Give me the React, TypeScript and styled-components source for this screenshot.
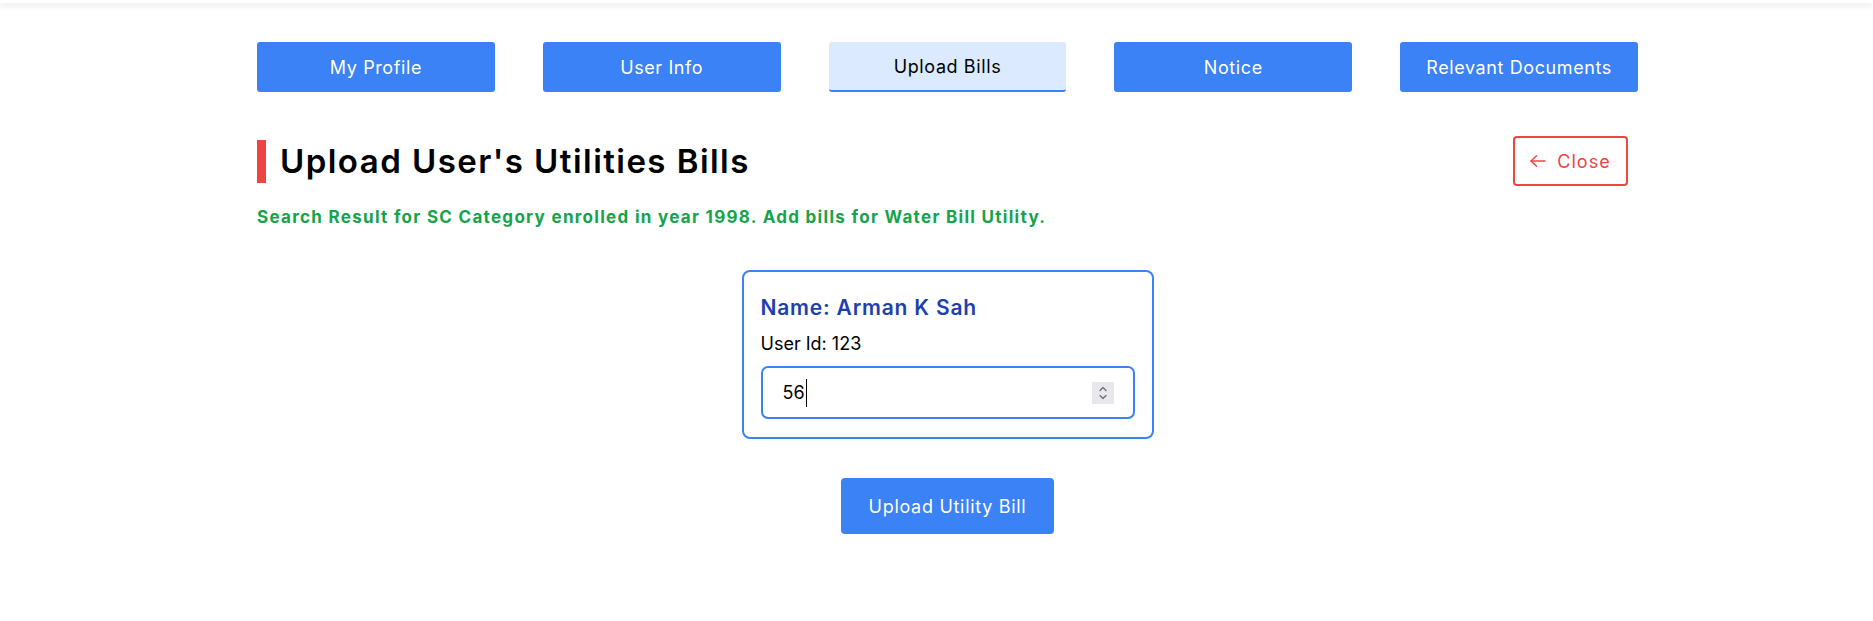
import React from "react";
import styled, { createGlobalStyle } from "styled-components";

const GlobalStyle = createGlobalStyle`
  html, body {
    margin: 0;
    padding: 0;
    background: #ffffff;
  }
  body {
    font-family: Inter, "Open Sans", Arial, sans-serif;
    color: #000000;
  }
  * { box-sizing: border-box; }
`;

const TopBar = styled.div`
  height: 3px;
  background: #ffffff;
  box-shadow: 0 2px 6px rgba(0, 0, 0, 0.14);
`;

const Main = styled.main`
  padding: 39px 235px 80px 257px;
`;

const Tabs = styled.nav`
  display: grid;
  grid-template-columns: repeat(5, 1fr);
  column-gap: 48px;
`;

const Tab = styled.button<{ $active?: boolean }>`
  height: 50px;
  border: none;
  border-radius: 3px;
  font-family: inherit;
  font-size: 18px;
  letter-spacing: 0.6px;
  font-weight: 400;
  cursor: pointer;
  background: ${(p) => (p.$active ? "#dbeafe" : "#3b82f6")};
  color: ${(p) => (p.$active ? "#000000" : "#ffffff")};
  border-bottom: ${(p) => (p.$active ? "2px solid #3b82f6" : "none")};
  padding: 0;
`;

const HeaderRow = styled.div`
  margin-top: 44px;
  display: flex;
  align-items: center;
  justify-content: space-between;
  padding-right: 10px;
`;

const Title = styled.h1`
  margin: 0;
  border-left: 9px solid #ef4444;
  padding-left: 14px;
  line-height: 43px;
  font-size: 33px;
  letter-spacing: 1.45px;
  font-weight: 600;
  color: #000000;
`;

const CloseButton = styled.button`
  width: 115px;
  height: 50px;
  display: flex;
  align-items: center;
  justify-content: center;
  gap: 11px;
  background: #ffffff;
  border: 2px solid #ef4444;
  border-radius: 4px;
  color: #ef4444;
  font-family: inherit;
  font-size: 18px;
  letter-spacing: 1px;
  cursor: pointer;
  padding: 0;
`;

const NoticeText = styled.p`
  margin: 19px 0 0;
  font-size: 17px;
  letter-spacing: 1.3px;
  line-height: 24px;
  font-weight: 700;
  color: #16a34a;
`;

const Center = styled.div<{ $top: number }>`
  display: flex;
  justify-content: center;
  margin-top: ${(p) => p.$top}px;
`;

const Card = styled.section`
  width: 412px;
  border: 2px solid #3b82f6;
  border-radius: 8px;
  padding: 22px 17px 18px;
  display: flex;
  flex-direction: column;
`;

const Name = styled.h2`
  margin: 0 0 9px;
  font-size: 21px;
  letter-spacing: 0.8px;
  line-height: 28px;
  font-weight: 600;
  color: #1e40af;
`;

const UserId = styled.div`
  font-size: 18px;
  line-height: 26px;
  margin-bottom: 9px;
`;

const Field = styled.div`
  height: 53px;
  border: 2px solid #3b82f6;
  border-radius: 7px;
  display: flex;
  align-items: center;
  padding: 0 19px 0 20px;
  font-size: 18px;
`;

const Value = styled.span`
  color: #000000;
`;

const Caret = styled.span`
  display: inline-block;
  width: 1px;
  height: 28px;
  background: #000000;
  margin-left: 1px;
`;

const Spacer = styled.span`
  flex: 1;
`;

const Spinner = styled.span`
  width: 22px;
  height: 22px;
  background: #e7e7ec;
  display: flex;
  align-items: center;
  justify-content: center;
`;

const UploadButton = styled.button`
  height: 56px;
  padding: 0 28px;
  border: none;
  border-radius: 4px;
  background: #3b82f6;
  color: #ffffff;
  font-family: inherit;
  font-size: 18px;
  letter-spacing: 0.7px;
  cursor: pointer;
`;

const tabs = ["My Profile", "User Info", "Upload Bills", "Notice", "Relevant Documents"];

export default function App() {
  return (
    <>
      <GlobalStyle />
      <TopBar />
      <Main>
        <Tabs>
          {tabs.map((t) => (
            <Tab key={t} $active={t === "Upload Bills"}>
              {t}
            </Tab>
          ))}
        </Tabs>
        <HeaderRow>
          <Title>Upload User's Utilities Bills</Title>
          <CloseButton>
            <svg width="16" height="12" viewBox="0 0 16 12" fill="none" stroke="#ef4444" strokeWidth="1.4" strokeLinecap="round" strokeLinejoin="round">
              <path d="M15 6H1" />
              <path d="M6.5 0.8L1 6l5.5 5.2" />
            </svg>
            <span>Close</span>
          </CloseButton>
        </HeaderRow>
        <NoticeText>
          Search Result for SC Category enrolled in year 1998. Add bills for Water Bill Utility.
        </NoticeText>
        <Center $top={41}>
          <Card>
            <Name>Name: Arman K Sah</Name>
            <UserId>User Id: 123</UserId>
            <Field>
              <Value>56</Value>
              <Caret />
              <Spacer />
              <Spinner>
                <svg width="10" height="16" viewBox="0 0 10 16" fill="none" stroke="#6b6b75" strokeWidth="1.2" strokeLinecap="round" strokeLinejoin="round">
                  <path d="M2 5.5L5 2.5l3 3" />
                  <path d="M2 10.5l3 3 3-3" />
                </svg>
              </Spinner>
            </Field>
          </Card>
        </Center>
        <Center $top={39}>
          <UploadButton>Upload Utility Bill</UploadButton>
        </Center>
      </Main>
    </>
  );
}
